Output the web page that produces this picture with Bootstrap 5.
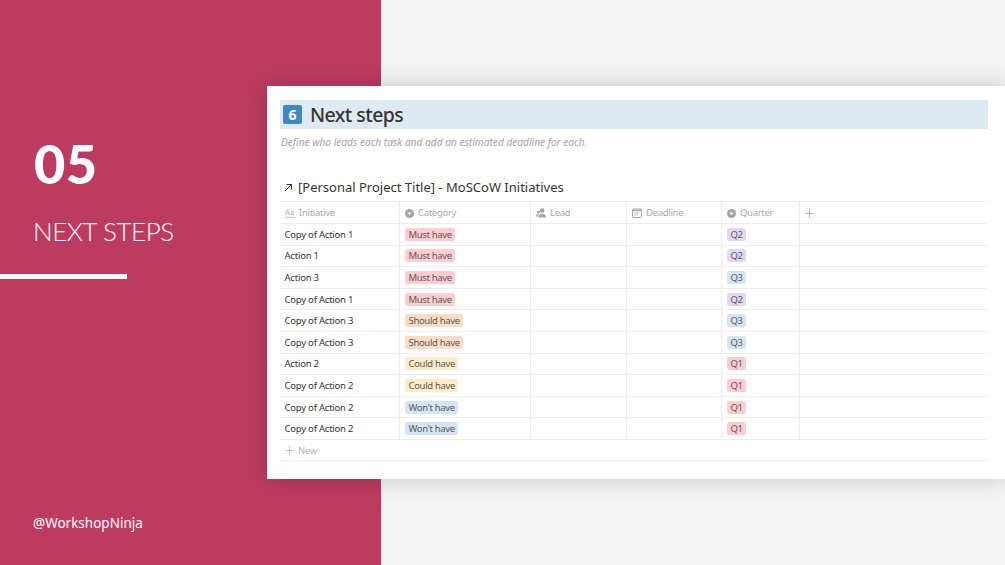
<!DOCTYPE html>
<html lang="en">
<head>
<meta charset="utf-8">
<title>Next steps</title>
<link href="https://cdn.jsdelivr.net/npm/bootstrap@5.3.0/dist/css/bootstrap.min.css" rel="stylesheet">
<style>
html,body{height:100%;margin:0;overflow:hidden}
body{background:#f4f4f4;font-family:"Noto Sans","Open Sans",sans-serif;color:#37352f}
.stage{width:1005px;height:565px;position:relative}
.side-panel{width:381px;height:565px;background:#bd3b61;color:#fff;padding-top:133px}
.side-num{font-family:Lato,sans-serif;font-weight:900;font-size:54px;line-height:62px;margin-left:34px;letter-spacing:.5px}
.side-title{font-family:Lato,sans-serif;font-weight:300;font-size:26px;line-height:34px;margin:19px 0 0 33px;letter-spacing:-.45px}
.side-rule{width:127px;height:5px;background:#fff;margin-top:26px}
.side-handle{font-size:13.5px;line-height:20px;margin:234px 0 0 33px}
.sheet{position:absolute;left:267px;top:86px;width:738px;height:393px;background:#fff;box-shadow:0 0 22px rgba(0,0,0,.2);padding:14px 17px 0 13px}
.head-bar{height:29px;background:#deeaf1;padding-left:3px;gap:8px}
.num-tile{width:19px;height:19px;background:#3d87c4;color:#fff;border-radius:2px;font-weight:700;font-size:14px;line-height:19px;text-align:center}
.head-text{font-size:19.500px;font-weight:500;line-height:29px;color:#37352f;letter-spacing:-.55px}
.sub-text{font-size:10.150px;font-style:italic;color:#a5a4a1;line-height:14px;margin:6px 0 0 1px}
.db-title{font-size:13px;font-weight:400;line-height:18px;margin:29px 0 5px 4px;gap:5px;color:#37352f}
.notion-grid{width:708px;table-layout:fixed;border-collapse:collapse;margin:0;font-size:9.5px}
.notion-grid th,.notion-grid td{border:solid #ededec;border-width:1px 1px 1px 0;padding:1px 5px 0;height:21.6px;line-height:14px;vertical-align:middle;background:transparent;box-shadow:none;white-space:nowrap}
.notion-grid th:last-child,.notion-grid td:last-child{border-right:0}
.notion-grid th{font-weight:400;color:#aaa9a6;height:22px;letter-spacing:-.3px}
.notion-grid td.name-cell{color:#37352f;padding-left:4.500px;letter-spacing:-.22px}
.hd{gap:4px}
.pill{display:inline-block;padding:0 3.500px;border-radius:2.500px;line-height:13px;color:#5c5a55;font-size:9.5px;letter-spacing:-.33px}
.must{background:#ffccd1}.should{background:#fddcc4}.could{background:#fdecc8}.wont{background:#d3e5f7}
.qp{background:#e3d7f5}.qb{background:#d3e5f7}.qr{background:#ffccd1}
.notion-grid td.new-row{border-right:0;color:#b9b8b5;height:21px;letter-spacing:-.3px;padding-top:2px}
</style>
</head>
<body>
<div class="stage">
  <div class="side-panel">
    <div class="side-num">05</div>
    <div class="side-title">NEXT STEPS</div>
    <div class="side-rule"></div>
    <div class="side-handle">@WorkshopNinja</div>
  </div>
  <div class="sheet">
    <div class="head-bar d-flex align-items-center">
      <span class="num-tile">6</span>
      <span class="head-text">Next steps</span>
    </div>
    <div class="sub-text">Define who leads each task and add an estimated deadline for each.</div>
    <div class="db-title d-flex align-items-center">
      <svg width="9" height="9" viewBox="0 0 9 9" fill="none" stroke="#37352f" stroke-width="1"><path d="M1 8 7.5 1.5M2.5 1.5h5v5"/></svg>
      <span>[Personal Project Title] - MoSCoW Initiatives</span>
    </div>
    <table class="notion-grid">
      <colgroup><col style="width:119.5px"><col style="width:131px"><col style="width:96px"><col style="width:95px"><col style="width:77.5px"><col></colgroup>
      <thead><tr>
        <th><span class="d-flex align-items-center hd"><svg width="10" height="9" viewBox="0 0 10 9" fill="#b4b3b0"><path d="M0 6 2 .5h1L5 6H4L3.6 4.6H1.4L1 6zM1.7 3.8h1.6L2.500 1.500z"/><path d="M7.500 2C6.500 2 6 2.400 5.800 3l.7.200c.1-.4.4-.5 1-.5s.9.200.9.700v.1L7 3.700C6 3.800 5.500 4.300 5.500 5s.5 1.100 1.300 1.100c.6 0 1-.2 1.300-.6V6h.8V3.500C9 2.500 8.500 2 7.500 2zm-.5 3.400c-.4 0-.7-.2-.7-.5s.3-.5.7-.5l1.400-.1V4.500c0 .5-.6.900-1.400.900z"/><path d="M0 7.800h10v.8H0z"/></svg>Initiative</span></th>
        <th><span class="d-flex align-items-center hd"><svg width="9" height="9" viewBox="0 0 9 9"><circle cx="4.500" cy="4.500" r="4.500" fill="#a5a4a1"/><path d="M2.300 3.400h4.400L4.500 6.200z" fill="#fff"/></svg>Category</span></th>
        <th><span class="d-flex align-items-center hd"><svg width="10" height="10" viewBox="0 0 10 10" fill="#a5a4a1"><circle cx="6.200" cy="2.500" r="2.300"/><path d="M2.500 9.500c0-2.500 1.500-3.800 3.700-3.800S10 7 10 9.500z"/><circle cx="2.500" cy="4" r="1.500"/><path d="M0 8.500C0 6.800 1 6 2.500 6L3 6.500C2.200 7.200 1.800 8 1.800 8.500z"/></svg>Lead</span></th>
        <th><span class="d-flex align-items-center hd"><svg width="10" height="10" viewBox="0 0 10 10" fill="none" stroke="#a5a4a1"><rect x=".5" y="1" width="9" height="8.500" rx=".8"/><path d="M.5 2.500h9" stroke-width="1.400"/><path d="M2.500 4.800h5M2.500 6.800h3.500" stroke-width=".8"/></svg>Deadline</span></th>
        <th><span class="d-flex align-items-center hd"><svg width="9" height="9" viewBox="0 0 9 9"><circle cx="4.500" cy="4.500" r="4.500" fill="#a5a4a1"/><path d="M2.300 3.400h4.400L4.500 6.200z" fill="#fff"/></svg>Quarter</span></th>
        <th><svg width="9" height="9" viewBox="0 0 9 9" stroke="#a5a4a1" stroke-width=".9"><path d="M4.500 .5v8M.5 4.500h8"/></svg></th>
      </tr></thead>
      <tbody>
        <tr><td class="name-cell">Copy of Action 1</td><td><span class="pill must">Must have</span></td><td></td><td></td><td><span class="pill qp">Q2</span></td><td></td></tr>
        <tr><td class="name-cell">Action 1</td><td><span class="pill must">Must have</span></td><td></td><td></td><td><span class="pill qp">Q2</span></td><td></td></tr>
        <tr><td class="name-cell">Action 3</td><td><span class="pill must">Must have</span></td><td></td><td></td><td><span class="pill qb">Q3</span></td><td></td></tr>
        <tr><td class="name-cell">Copy of Action 1</td><td><span class="pill must">Must have</span></td><td></td><td></td><td><span class="pill qp">Q2</span></td><td></td></tr>
        <tr><td class="name-cell">Copy of Action 3</td><td><span class="pill should">Should have</span></td><td></td><td></td><td><span class="pill qb">Q3</span></td><td></td></tr>
        <tr><td class="name-cell">Copy of Action 3</td><td><span class="pill should">Should have</span></td><td></td><td></td><td><span class="pill qb">Q3</span></td><td></td></tr>
        <tr><td class="name-cell">Action 2</td><td><span class="pill could">Could have</span></td><td></td><td></td><td><span class="pill qr">Q1</span></td><td></td></tr>
        <tr><td class="name-cell">Copy of Action 2</td><td><span class="pill could">Could have</span></td><td></td><td></td><td><span class="pill qr">Q1</span></td><td></td></tr>
        <tr><td class="name-cell">Copy of Action 2</td><td><span class="pill wont">Won't have</span></td><td></td><td></td><td><span class="pill qr">Q1</span></td><td></td></tr>
        <tr><td class="name-cell">Copy of Action 2</td><td><span class="pill wont">Won't have</span></td><td></td><td></td><td><span class="pill qr">Q1</span></td><td></td></tr>
        <tr><td class="new-row" colspan="6"><span class="d-flex align-items-center hd"><svg width="9" height="9" viewBox="0 0 9 9" stroke="#b4b3b0" stroke-width=".9"><path d="M4.500 .5v8M.5 4.500h8"/></svg>New</span></td></tr>
      </tbody>
    </table>
  </div>
</div>
<script src="https://cdn.jsdelivr.net/npm/bootstrap@5.3.0/dist/js/bootstrap.bundle.min.js"></script>
</body>
</html>
